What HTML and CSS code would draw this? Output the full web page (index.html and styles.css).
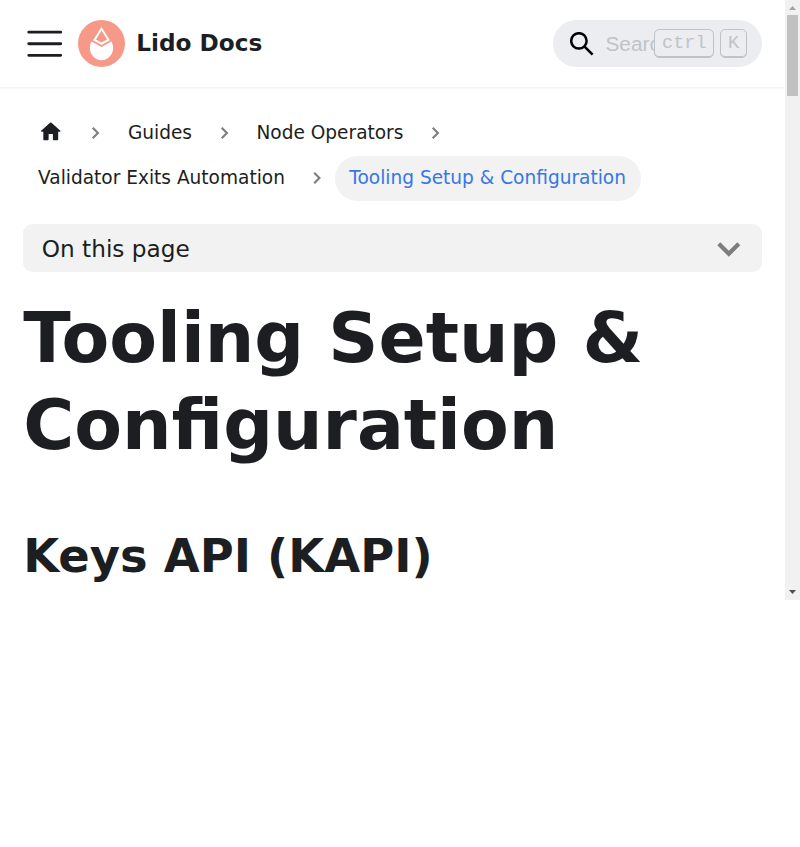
FILE: index.html
```html
<!DOCTYPE html>
<html lang="en">
<head>
<meta charset="utf-8">
<title>Tooling Setup &amp; Configuration | Lido Docs</title>
<link rel="stylesheet" href="styles.css">
</head>
<body>
<div class="viewport">
  <div class="page">
    <nav class="navbar">
      <button class="toggle" aria-label="Menu"><svg viewBox="0 0 30 30"><path stroke="currentColor" stroke-linecap="round" stroke-miterlimit="10" stroke-width="2" d="M4 7h22M4 15h22M4 23h22"/></svg></button>
      <a class="brand">
        <svg class="logo" viewBox="0 0 47 47"><circle cx="23.5" cy="23.5" r="23.5" fill="#f69988"/><path fill="#fff" fill-rule="evenodd" d="M23.5 7l8.4 13.2-8.4 4.7-8.4-4.7zM23.5 10.6l-5.6 8.9 5.6 2.9 5.6-2.9z"/><path fill="#fff" d="M13.6 21.5l9.9 5.6 9.9-5.6c1.2 2.1 1.7 4.2 1.7 6.5 0 6.6-5.1 12.2-11.6 12.2S11.9 34.6 11.9 28c0-2.3.5-4.4 1.7-6.5z"/></svg>
        <b>Lido Docs</b>
      </a>
      <div class="search">
        <svg class="lens" viewBox="0 0 24 24" fill="none" stroke="#000"><circle cx="8.9" cy="8.9" r="7.7" stroke-width="2.5"/><path d="M14.3 14.3l8.3 8.3" stroke-width="2.6"/></svg>
        <span class="placeholder">Search</span>
        <span class="keys"><kbd>ctrl</kbd><kbd>K</kbd></span>
      </div>
    </nav>
    <main>
      <ul class="crumbs">
        <li><a class="crumb"><svg class="home" viewBox="0 0 24 24"><path d="M10 19v-5h4v5c0 .55.45 1 1 1h3c.55 0 1-.45 1-1v-7h1.7c.46 0 .68-.57.33-.87L12.67 3.6c-.38-.34-.96-.34-1.34 0l-8.36 7.53c-.34.3-.13.87.33.87H5v7c0 .55.45 1 1 1h3c.55 0 1-.45 1-1z" fill="currentColor"/></svg></a><svg class="sep" viewBox="0 0 11 14"><path d="M2.7 1.8l5.2 5.2-5.2 5.2"/></svg></li>
        <li><a class="crumb">Guides</a><svg class="sep" viewBox="0 0 11 14"><path d="M2.7 1.8l5.2 5.2-5.2 5.2"/></svg></li>
        <li><a class="crumb">Node Operators</a><svg class="sep" viewBox="0 0 11 14"><path d="M2.7 1.8l5.2 5.2-5.2 5.2"/></svg></li>
        <li><a class="crumb">Validator Exits Automation</a><svg class="sep" viewBox="0 0 11 14"><path d="M2.2 1.8l5.2 5.2-5.2 5.2"/></svg></li>
        <li><span class="crumb active">Tooling Setup &amp; Configuration</span></li>
      </ul>
      <button class="toc">On this page<svg viewBox="0 0 24 15"><path d="M1.8 1.8l10 10 10-10"/></svg></button>
      <h1>Tooling Setup &amp; Configuration</h1>
      <h2>Keys API (KAPI)</h2>
    </main>
  </div>
  <div class="scrollbar">
    <svg class="arrow" viewBox="0 0 15 15"><path d="M4 10h7L7.5 6z" fill="#a3a3a3"/></svg>
    <div class="thumb"></div>
    <svg class="arrow last" viewBox="0 0 15 15"><path d="M4 5h7L7.5 9z" fill="#505050"/></svg>
  </div>
</div>
</body>
</html>
```
FILE: styles.css
```css
* { box-sizing: border-box; }
html { font-size: 23.2px; }
body {
  margin: 0;
  background: #fff;
  color: #1c1e21;
  font-family: "DejaVu Sans", sans-serif;
  line-height: 1.65;
}
button { border: 0; padding: 0; font: inherit; color: inherit; background: none; }
svg { display: block; }
.viewport { display: flex; width: 800px; height: 600px; overflow: hidden; }
.page { width: 785px; }
.navbar {
  display: flex;
  align-items: center;
  height: 87px;
  padding: 0 1rem;
  box-shadow: 0 1px 2px rgba(0, 0, 0, .07);
}
.toggle { margin-right: 11.3px; }
.toggle svg { width: 43.5px; height: 43.5px; }
.brand { display: flex; align-items: center; margin-right: auto; }
.logo { width: 47px; height: 47px; margin-right: 11.3px; }
.brand b { line-height: 1.65; }
.search {
  position: relative;
  display: flex;
  align-items: center;
  width: 209px;
  height: 47px;
  padding-left: 16.7px;
  border-radius: 24px;
  background: #ebedf0;
}
.lens { width: 24px; height: 24px; margin-right: 11.9px; }
.placeholder {
  width: 50px;
  overflow: hidden;
  font: 20.88px "Liberation Sans", sans-serif;
  color: #bec3c9;
}
.keys { position: absolute; right: 15px; top: 9px; display: flex; gap: 6px; }
kbd {
  height: 29px;
  padding: 0 6.7px;
  border: 1px solid #bec3c9;
  border-radius: 5px;
  box-shadow: inset 0 -1px 0 #bec3c9;
  font: 18.56px/28px "Liberation Mono", monospace;
  color: #bec3c9;
}
main { padding: 1rem; }
.crumbs { display: flex; flex-wrap: wrap; margin: 0 0 22.8px; padding: 0; list-style: none; font-size: .8rem; }
.crumbs li { display: flex; align-items: center; }
.crumb { display: block; padding: 7.4px 14.6px; height: 45.5px; line-height: 30.7px; border-radius: 46px; }
.crumb.active { background: #f2f2f2; color: #3578e5; }
.crumbs li:first-child .crumb, .crumbs li:nth-child(4) .crumb { padding-left: 14.85px; }
.home { width: 25.5px; height: 25.5px; margin-top: 1px; }
.sep { width: 11px; height: 14px; margin: 0 12.1px; fill: none; stroke: #808080; stroke-width: 2.2; }
.toc {
  display: flex;
  align-items: center;
  justify-content: space-between;
  width: 100%;
  height: 48px;
  padding: 2px 21px 0 18.6px;
  border-radius: 9.3px;
  background: #f2f2f2;
}
.toc svg { width: 24px; height: 15px; margin-top: 1px; fill: none; stroke: #7d7d7d; stroke-width: 4.2; }
h1, h2 { margin: 0; font-weight: 700; line-height: 1.25; }
h1 { margin-top: 23.2px; font-size: 3rem; }
h2 { margin-top: 58px; font-size: 2rem; }
.scrollbar { display: flex; flex-direction: column; width: 15px; background: #f1f1f1; }
.arrow { width: 15px; height: 15px; }
.arrow.last { margin-top: auto; }
.thumb { width: 11px; height: 81px; margin: 0 2px; background: #c1c1c1; }
```
